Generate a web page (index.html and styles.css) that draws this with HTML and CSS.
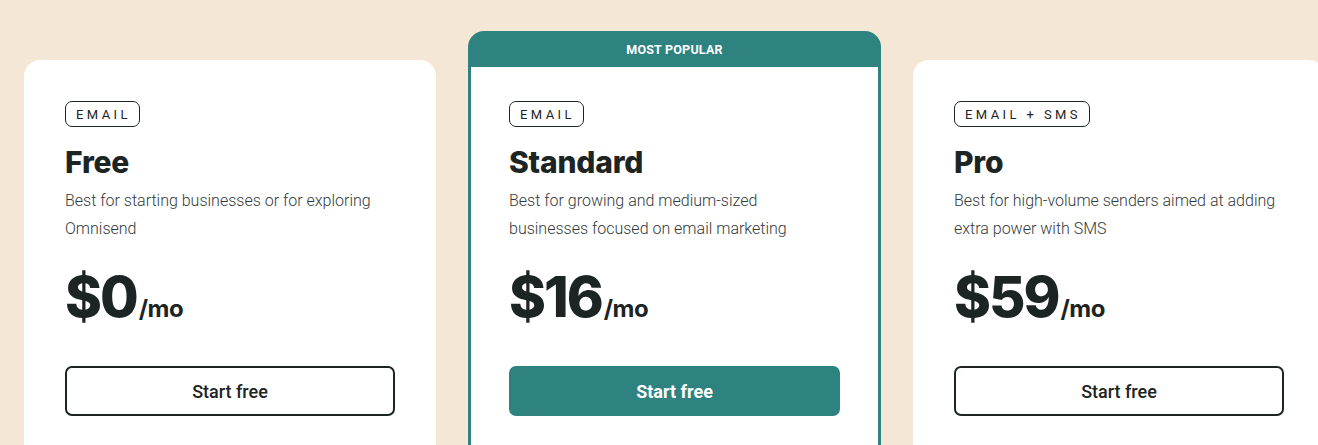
FILE: index.html
```html
<!DOCTYPE html>
<html lang="en">
<head>
<meta charset="utf-8">
<title>Pricing</title>
<link rel="stylesheet" href="styles.css">
</head>
<body>
<main class="plans">
  <section class="card">
    <div class="card-body">
      <span class="badge">EMAIL</span>
      <h2 class="title">Free</h2>
      <p class="desc">Best for starting businesses or for exploring Omnisend</p>
      <div class="price"><span class="amount">$0</span><span class="per">/mo</span></div>
      <a class="btn">Start free</a>
    </div>
  </section>
  <section class="card featured">
    <div class="ribbon">MOST POPULAR</div>
    <div class="card-body">
      <span class="badge">EMAIL</span>
      <h2 class="title">Standard</h2>
      <p class="desc">Best for growing and medium-sized businesses focused on email marketing</p>
      <div class="price"><span class="amount">$16</span><span class="per">/mo</span></div>
      <a class="btn btn-primary">Start free</a>
    </div>
  </section>
  <section class="card">
    <div class="card-body">
      <span class="badge">EMAIL + SMS</span>
      <h2 class="title">Pro</h2>
      <p class="desc">Best for high-volume senders aimed at adding extra power with SMS</p>
      <div class="price"><span class="amount">$59</span><span class="per">/mo</span></div>
      <a class="btn">Start free</a>
    </div>
  </section>
</main>
</body>
</html>
```

FILE: styles.css
```css
* { box-sizing: border-box; }

html, body {
  margin: 0;
  height: 445px;
  overflow: hidden;
}

body {
  background: #f4e7d5;
  font-family: Roboto, "Liberation Sans", sans-serif;
  color: #1d2424;
}

.plans {
  display: flex;
  align-items: flex-start;
  gap: 32px;
  padding: 31px 0 0 24px;
  width: 1400px;
}

.card {
  flex: 0 0 412px;
  margin-top: 29px;
  background: #ffffff;
  border-radius: 16px;
}

.card-body {
  display: flex;
  flex-direction: column;
  align-items: flex-start;
  padding: 41px 41px 80px;
}

.featured {
  flex-basis: 413px;
  margin-top: 0;
  background: #2e8280;
  padding: 0 3px 3px;
}

.featured .card-body {
  background: #ffffff;
  padding: 34px 38px 80px;
}

.ribbon {
  height: 36px;
  display: flex;
  align-items: center;
  justify-content: center;
  color: #ffffff;
  font-family: Roboto, sans-serif;
  font-weight: 700;
  font-size: 12.5px;
  letter-spacing: 0.2px;
}

.badge {
  display: inline-flex;
  align-items: center;
  height: 26px;
  padding: 0 8px 0 10px;
  border: 1px solid #1d2424;
  border-radius: 7px;
  font-size: 13px;
  font-weight: 400;
  letter-spacing: 3.4px;
  color: #1d2424;
}

.title {
  margin: 17px 0 0;
  font-family: Inter, "Open Sans", sans-serif;
  font-weight: 800;
  font-size: 30px;
  line-height: 36px;
  letter-spacing: -0.2px;
  color: #1d2424;
}

.desc {
  margin: 7px 0 0;
  font-size: 16px;
  font-weight: 300;
  line-height: 28px;
  color: #333a3a;
}

.price {
  margin-top: 22px;
  display: flex;
  align-items: baseline;
  font-family: Inter, sans-serif;
  font-weight: 800;
  line-height: 64px;
  height: 64px;
  color: #1d2424;
}

.amount {
  font-size: 56px;
  letter-spacing: -2px;
}

.per {
  font-size: 24px;
  font-weight: 700;
  letter-spacing: -0.5px;
  margin-left: 2px;
}

.btn {
  margin-top: 37px;
  width: 100%;
  height: 50px;
  display: flex;
  align-items: center;
  justify-content: center;
  border: 2px solid #1d2424;
  border-radius: 7px;
  font-size: 18px;
  font-weight: 500;
  color: #1d2424;
  background: #ffffff;
  cursor: pointer;
}

.btn-primary {
  background: #2e8280;
  border-color: #2e8280;
  color: #ffffff;
  font-weight: 700;
}
```
